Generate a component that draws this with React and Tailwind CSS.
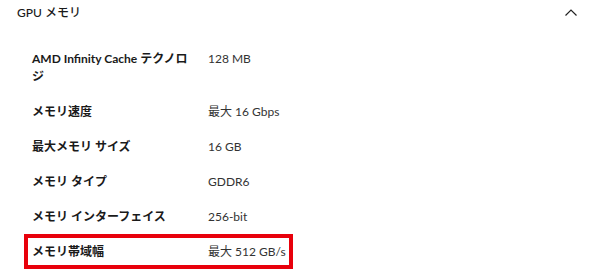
const specs = [
    { label: "AMD Infinity Cache テクノロジ", value: "128 MB" },
    { label: "メモリ速度", value: "最大 16 Gbps" },
    { label: "最大メモリ サイズ", value: "16 GB" },
    { label: "メモリ タイプ", value: "GDDR6" },
    { label: "メモリ インターフェイス", value: "256-bit" },
    { label: "メモリ帯域幅", value: "最大 512 GB/s", highlight: true },
];

const App = () => {
    return (
        <div className="w-[590px] h-[273px] bg-white overflow-hidden text-[#1a1a1a]" style={{ fontFamily: 'Lato, "Noto Sans CJK JP", sans-serif' }}>
            {/* Header */}
            <div className="flex items-center justify-between h-[26px] pl-[17px] pr-[10px]">
                <span className="text-[12px] leading-[18px] font-medium">GPU メモリ</span>
                <svg width="14" height="14" viewBox="0 0 14 14" fill="none" stroke="#222" strokeWidth="1.2" className="mr-[2px]">
                    <path d="M1.5 9.5 L7 4 L12.5 9.5" />
                </svg>
            </div>

            <div className="pt-[15px]">
                {specs.map((s) => (
                    <div
                        key={s.label}
                        className={`flex ml-[24px] w-[269px] py-[4.5px] border-4 ${s.highlight ? "border-[#e8000b]" : "border-transparent"}`}
                    >
                        <div className="w-[160px] mr-[20px] pl-[4px] text-[12px] leading-[18px] font-bold">{s.label}</div>
                        <div className="text-[12px] leading-[18px] text-[#333]">{s.value}</div>
                    </div>
                ))}
            </div>
        </div>
    );
};

export default App;
